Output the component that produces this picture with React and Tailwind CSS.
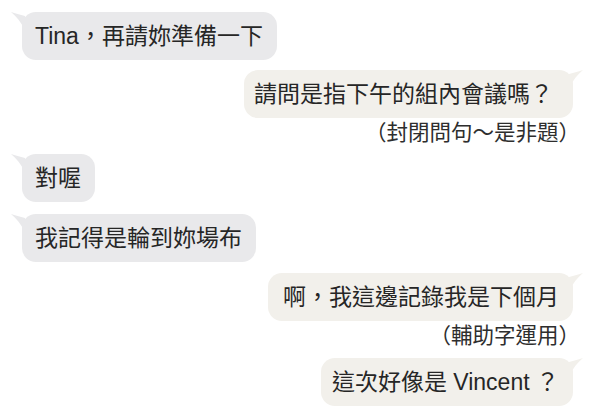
import React from "react";

const font = {
  fontFamily: '"Liberation Sans", "Noto Sans CJK TC", sans-serif',
};

const TailLeft = ({ color }) => (
  <svg
    className="absolute -left-[11px] top-0"
    width="14"
    height="18"
    viewBox="0 0 14 18"
  >
    <path d="M0 0 C4 1 9 3 14 4 L14 18 C10 10 5 4 0 0 Z" fill={color} />
  </svg>
);

const TailRight = ({ color }) => (
  <svg
    className="absolute -right-[10px] top-0"
    width="14"
    height="18"
    viewBox="0 0 14 18"
  >
    <path d="M14 0 C10 1 5 3 0 4 L0 18 C4 10 9 4 14 0 Z" fill={color} />
  </svg>
);

const Left = ({ children, className = "" }) => (
  <div
    className={
      "relative self-start ml-[22px] rounded-[14px] bg-[#e9e9eb] pl-[13px] pr-[14px] py-[9px] text-[23px] leading-[30px] text-[#262626] " +
      className
    }
  >
    <TailLeft color="#e9e9eb" />
    {children}
  </div>
);

const Right = ({ children, className = "" }) => (
  <div
    className={
      "relative self-end mr-[27px] rounded-[14px] bg-[#f2f0eb] py-[9px] text-[23px] leading-[30px] text-[#262626] " +
      className
    }
  >
    <TailRight color="#f2f0eb" />
    {children}
  </div>
);

// side notes under the replies
const Note = ({ children }) => (
  <div className="self-end mr-[20px] text-[21.5px] leading-[30px] text-[#2e2e2e]">
    {children}
  </div>
);

export default function App() {
  return (
    <div
      className="w-[600px] h-[415px] bg-white overflow-hidden flex flex-col pt-[12px]"
      style={font}
    >
      <Left>Tina，再請妳準備一下</Left>
      <Right className="mt-[10px] pl-[10px] pr-[20px]">
        請問是指下午的組內會議嗎？
      </Right>
      <Note>（封閉問句～是非題）</Note>
      <Left className="mt-[6px]">對喔</Left>
      <Left className="mt-[12px]">我記得是輪到妳場布</Left>
      <Right className="mt-[11px] pl-[15px] pr-[14px]">
        啊，我這邊記錄我是下個月
      </Right>
      <Note>（輔助字運用）</Note>
      <Right className="mt-[7px] pl-[11px] pr-[14px]">
        這次好像是 Vincent ？
      </Right>
    </div>
  );
}
